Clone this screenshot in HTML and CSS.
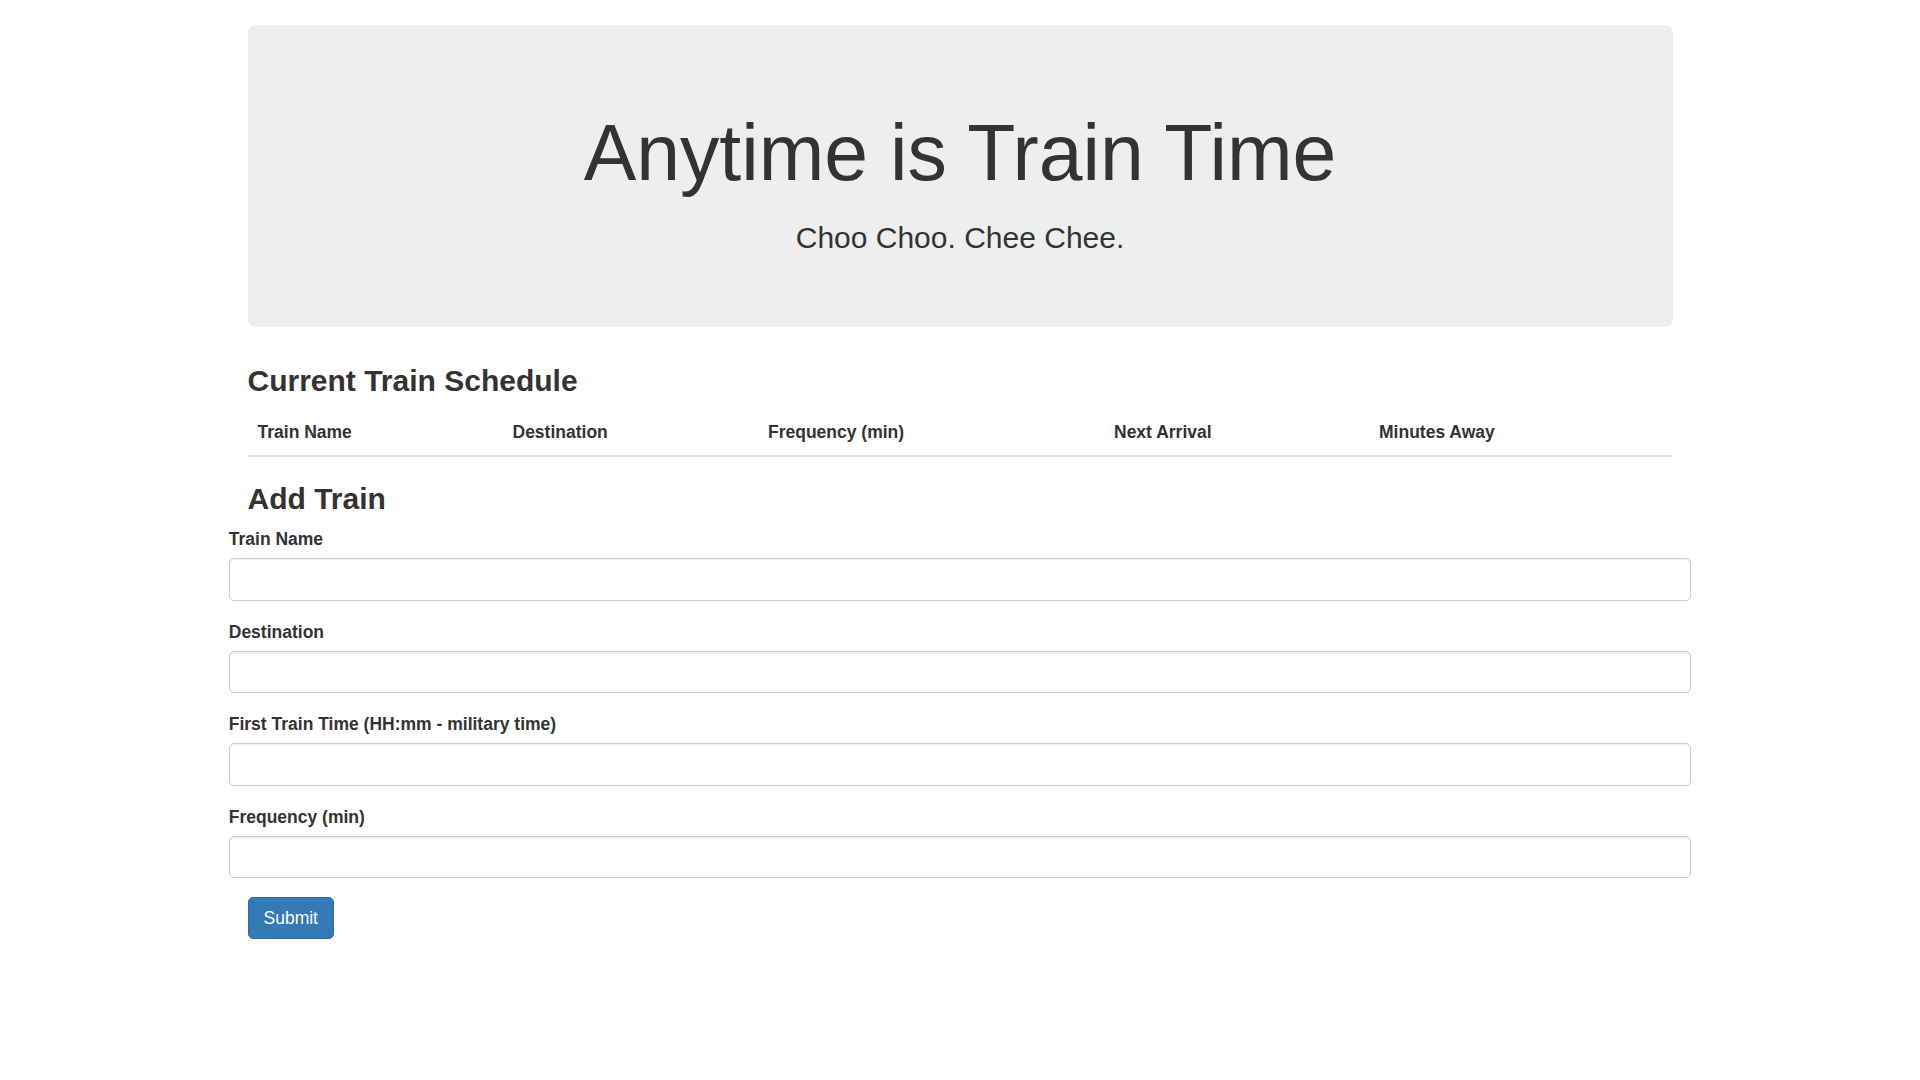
FILE: index.html
```html
<!DOCTYPE html>
<html lang="en">
<head>
<meta charset="utf-8">
<title>Train Scheduler</title>
<link rel="stylesheet" href="styles.css">
</head>
<body>
<div class="container">
  <div class="jumbotron">
    <h1 class="jumbo-title">Anytime is Train Time</h1>
    <p class="jumbo-sub">Choo Choo. Chee Chee.</p>
  </div>

  <h3 class="section-title schedule-title">Current Train Schedule</h3>
  <table class="schedule">
    <thead>
      <tr>
        <th class="col-name">Train Name</th>
        <th class="col-dest">Destination</th>
        <th class="col-freq">Frequency (min)</th>
        <th class="col-next">Next Arrival</th>
        <th class="col-away">Minutes Away</th>
      </tr>
    </thead>
    <tbody></tbody>
  </table>

  <h3 class="section-title add-title">Add Train</h3>
  <form class="train-form">
    <div class="form-group">
      <label class="field-label" for="name">Train Name</label>
      <input class="field-input" id="name" type="text">
    </div>
    <div class="form-group">
      <label class="field-label" for="dest">Destination</label>
      <input class="field-input" id="dest" type="text">
    </div>
    <div class="form-group">
      <label class="field-label" for="first">First Train Time (HH:mm - military time)</label>
      <input class="field-input" id="first" type="text">
    </div>
    <div class="form-group">
      <label class="field-label" for="freq">Frequency (min)</label>
      <input class="field-input" id="freq" type="text">
    </div>
    <button class="btn-submit" type="button">Submit</button>
  </form>
</div>
</body>
</html>
```

FILE: styles.css
```css
* { box-sizing: border-box; }

html, body {
  margin: 0;
  padding: 0;
  background: #fff;
}

body {
  font-family: "Liberation Sans", Arial, Helvetica, sans-serif;
  font-size: 17.5px;
  line-height: 25px;
  color: #333;
}

.container {
  width: 1462.5px;
  margin: 0 auto;
  padding: 25px 18.75px 0;
}

.jumbotron {
  background: #eee;
  border-radius: 7.5px;
  padding: 85.2px 75px 69px;
  text-align: center;
}

.jumbo-title {
  margin: 0 0 21.7px;
  font-size: 78.75px;
  line-height: 87px;
  font-weight: 400;
  color: #333;
}

.jumbo-sub {
  margin: 0 0 1.3px;
  font-size: 30px;
  line-height: 37.5px;
  font-weight: 400;
}

.section-title {
  font-size: 30px;
  line-height: 33px;
  font-weight: 700;
  color: #333;
}

.schedule-title {
  margin: 37.4px 0 12.5px;
}

.add-title {
  margin: 0 0 12.5px;
}

.schedule {
  width: 100%;
  table-layout: fixed;
  border-collapse: collapse;
  border-spacing: 0;
  margin-bottom: 25px;
}

.schedule th {
  text-align: left;
  font-weight: 700;
  padding: 10px;
  line-height: 25px;
  border-bottom: 2.5px solid #ddd;
  vertical-align: bottom;
}

.col-name { width: 255px; }
.col-dest { width: 255.5px; }
.col-freq { width: 346px; }
.col-next { width: 265px; }
.col-away { width: 303.5px; }

.train-form {
  margin: 0 -18.75px;
}

.form-group {
  margin-bottom: 18.75px;
}

.field-label {
  display: block;
  margin-bottom: 6.25px;
  font-weight: 700;
  line-height: 25px;
}

.field-input {
  display: block;
  width: 100%;
  height: 42.5px;
  padding: 7.5px 15px;
  font-family: inherit;
  font-size: 17.5px;
  color: #555;
  background: #fff;
  border: 1.25px solid #ccc;
  border-radius: 5px;
  box-shadow: inset 0 1.25px 1.25px rgba(0, 0, 0, 0.075);
}

.btn-submit {
  display: inline-block;
  margin-left: 18.75px;
  padding: 7.5px 15px;
  font-family: inherit;
  font-size: 17.5px;
  line-height: 25px;
  color: #fff;
  background: #337ab7;
  border: 1.25px solid #2e6da4;
  border-radius: 5px;
  cursor: pointer;
}
```
